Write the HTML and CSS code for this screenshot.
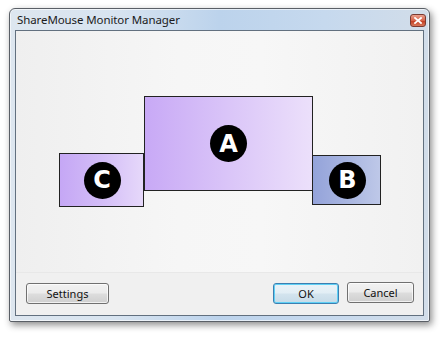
FILE: index.html
```html
<!DOCTYPE html>
<html>
<head>
<meta charset="utf-8">
<link rel="stylesheet" href="styles.css">
</head>
<body>
<div class="window">
  <div class="titlebar">
    <span class="title">ShareMouse Monitor Manager</span>
    <span class="close"><svg width="8" height="7" viewBox="0 0 8 7"><path d="M1 1 L7 6 M7 1 L1 6" stroke="#fff" stroke-width="1.8" stroke-linecap="square"/></svg></span>
  </div>
  <div class="client">
    <div class="canvas">
      <div class="monitor mon-a"><span class="badge">A</span></div>
      <div class="monitor mon-c"><span class="badge">C</span></div>
      <div class="monitor mon-b"><span class="badge">B</span></div>
    </div>
    <div class="buttons">
      <button class="btn btn-settings">Settings</button>
      <div class="spacer"></div>
      <button class="btn btn-ok">OK</button>
      <button class="btn btn-cancel">Cancel</button>
    </div>
  </div>
</div>
</body>
</html>
```
FILE: styles.css
```css
html, body {
  margin: 0;
  padding: 0;
  background: #ffffff;
}
body {
  width: 442px;
  height: 337px;
  overflow: hidden;
  font-family: "Noto Sans", "Open Sans", sans-serif;
}
.window {
  margin: 8px 0 0 9px;
  width: 409px;
  height: 307px;
  border: 1px solid #5a5f66;
  border-radius: 6px 6px 2px 2px;
  background: linear-gradient(to right, #dde6ef 0%, #d8e4f0 25%, #bcd3ec 50%, #c6d9ee 75%, #d2dde9 100%);
  box-shadow: 2px 3px 7px rgba(0,0,0,0.45), inset 0 0 0 1px rgba(255,255,255,0.6);
  display: flex;
  flex-direction: column;
  padding: 0 5px 5px 5px;
  box-sizing: content-box;
}
.titlebar {
  height: 21px;
  display: flex;
  align-items: center;
  position: relative;
}
.title {
  font-size: 11.5px;
  color: #1b1b1b;
  margin-left: 2px;
  margin-top: -1px;
  letter-spacing: -0.1px;
}
.close {
  position: absolute;
  right: -2px;
  top: 5px;
  width: 16px;
  height: 13px;
  border: 1px solid #7a3a32;
  border-radius: 3px;
  background: linear-gradient(#e9a08e 0%, #d7644c 50%, #c23a1f 52%, #d8785c 100%);
  display: flex;
  align-items: center;
  justify-content: center;
  box-sizing: border-box;
}
.client {
  flex: 1;
  border: 1px solid #62707f;
  background: #f0f0f0;
  display: flex;
  flex-direction: column;
}
.canvas {
  height: 241px;
  position: relative;
  border-bottom: 1px solid #e8e8e8;
  background: linear-gradient(to right, #efefef 0%, #f6f6f6 40%, #f7f7f7 60%, #f1f1f1 100%);
}
.monitor {
  position: absolute;
  box-sizing: border-box;
  border: 1px solid #222;
  display: flex;
  align-items: center;
  justify-content: center;
}
.mon-a {
  left: 128px;
  top: 65px;
  width: 169px;
  height: 95px;
  background: linear-gradient(to right, #c8a9f6 0%, #dac5f8 50%, #ece0fb 100%);
}
.mon-c {
  left: 43px;
  top: 122px;
  width: 85px;
  height: 54px;
  background: linear-gradient(to right, #c5a7f5 0%, #d3bdf7 50%, #e6d8fa 100%);
}
.mon-b {
  left: 296px;
  top: 124px;
  width: 69px;
  height: 50px;
  background: linear-gradient(to right, #94a3da 0%, #a8b5e0 50%, #bec8e8 100%);
}
.badge {
  width: 37px;
  height: 37px;
  border-radius: 50%;
  background: #000;
  color: #fff;
  font-family: "DejaVu Sans", sans-serif;
  font-weight: bold;
  font-size: 24px;
  display: flex;
  align-items: center;
  justify-content: center;
  line-height: 1;
}
.mon-c .badge { margin-left: 1px; }
.mon-b .badge { margin-left: 2px; }
.buttons {
  flex: 1;
  display: flex;
  align-items: flex-start;
  padding: 10px 9px 0 10px;
  gap: 8px;
}
.spacer { flex: 1; }
.btn {
  height: 21px;
  box-sizing: border-box;
  border: 1px solid #707070;
  border-radius: 3px;
  background: linear-gradient(#f2f2f2 0%, #ebebeb 48%, #dddddd 52%, #cfcfcf 100%);
  box-shadow: inset 0 0 0 1px rgba(255,255,255,0.7);
  font-family: "Noto Sans", "Open Sans", sans-serif;
  font-size: 11px;
  color: #111;
  padding: 0;
  line-height: 17px;
}
.btn-settings { width: 83px; }
.btn-ok {
  width: 66px;
  border-color: #3c7fb1;
  box-shadow: inset 0 0 0 1px #5fd0f5;
  background: linear-gradient(#eaf3f8 0%, #e2eef5 48%, #d3e4ee 52%, #c6dbe8 100%);
}
.btn-cancel {
  width: 67px;
  margin-top: -1px;
}
```
